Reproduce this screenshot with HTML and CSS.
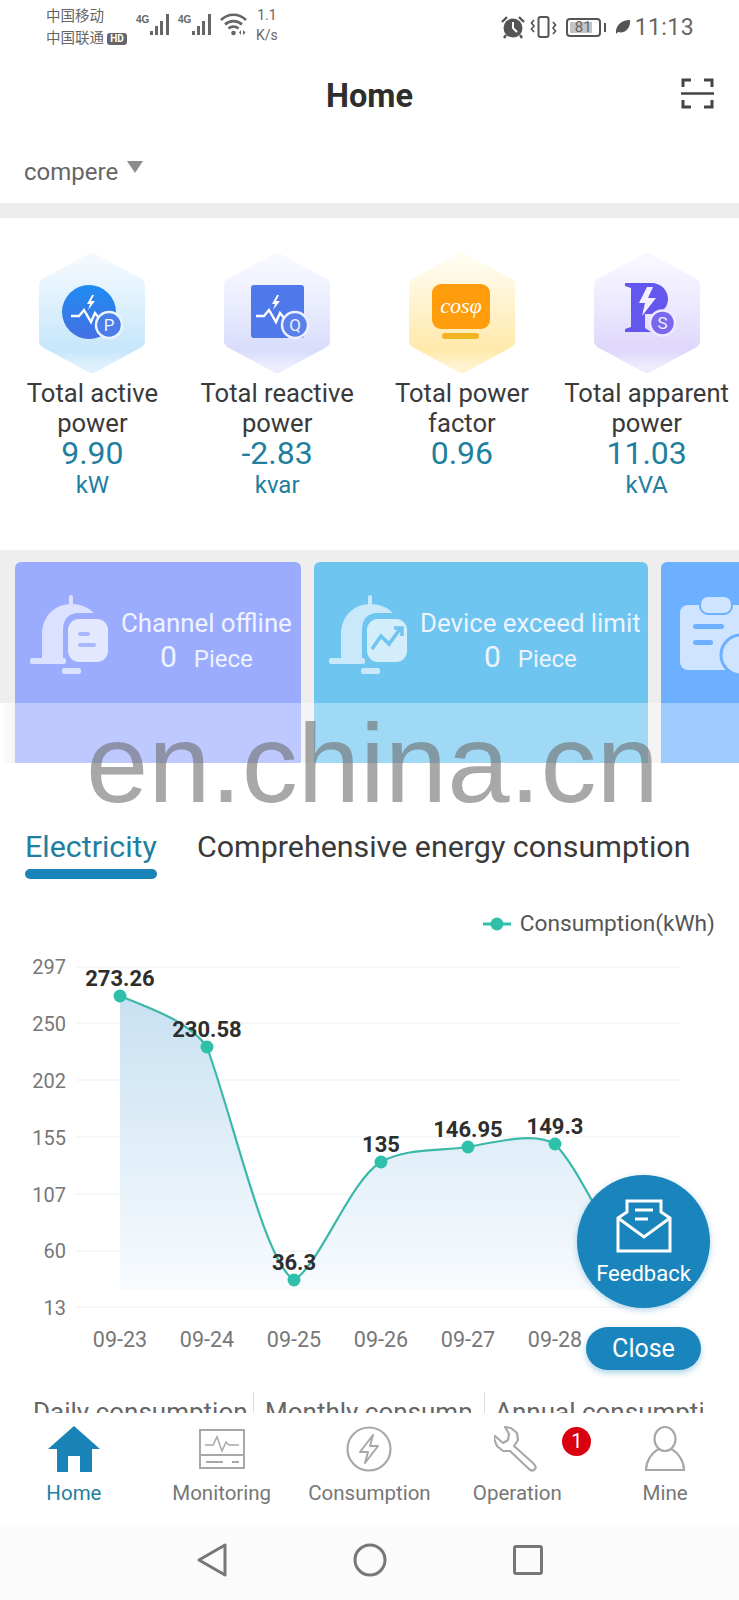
FILE: index.html
```html
<!DOCTYPE html>
<html lang="en">
<head>
  <meta charset="UTF-8">
  <meta name="viewport" content="width=device-width, initial-scale=1.0">
  <title>Home</title>
  <link rel="stylesheet" href="styles.css">
</head>
<body>
  <div class="page">

    <!-- phone status bar -->
    <div class="status">
      <div class="carrier">
        <div>中国移动</div>
        <div>中国联通 <span class="hd">HD</span></div>
      </div>
      <svg class="signal" width="36" height="24" viewBox="0 0 36 24">
        <text x="0" y="10" class="tiny">4G</text>
        <rect x="14" y="18" width="3" height="4"/><rect x="19" y="13" width="3" height="9"/><rect x="24" y="8" width="3" height="14"/><rect x="30" y="1" width="3" height="21"/>
      </svg>
      <svg class="signal" width="36" height="24" viewBox="0 0 36 24">
        <text x="0" y="10" class="tiny">4G</text>
        <rect x="14" y="18" width="3" height="4"/><rect x="19" y="13" width="3" height="9"/><rect x="24" y="8" width="3" height="14"/><rect x="30" y="1" width="3" height="21"/>
      </svg>
      <svg class="wifi" width="27" height="24" viewBox="0 0 27 24">
        <path d="M1 7C8 0 19 0 26 7M5 11.500C10 7 17 7 22 11.500M8.500 15.500C11.500 13 15.500 13 18.500 15.500" fill="none" stroke="#666" stroke-width="2.600"/>
        <circle cx="13.500" cy="20" r="2.300" fill="#666"/>
        <path d="M21 17v5l-2-2.500zM23 17v5l2.500-2.500z" fill="#666"/>
      </svg>
      <div class="speed"><div>1.1</div><div>K/s</div></div>

      <div class="status-right">
        <svg width="24" height="24" viewBox="0 0 24 24">
          <path d="M1 7l5-5M23 7l-5-5" stroke="#555" stroke-width="2.400" fill="none"/>
          <circle cx="12" cy="13" r="9.500" fill="#555"/>
          <path d="M5 20l-2 3M19 20l2 3" stroke="#555" stroke-width="2.400"/>
          <path d="M12 7v6l4 4" stroke="#fff" stroke-width="2" fill="none"/>
        </svg>
        <svg width="27" height="24" viewBox="0 0 27 24">
          <rect x="8.500" y="2" width="10" height="20" rx="2" fill="none" stroke="#555" stroke-width="2"/>
          <path d="M4 5L1.500 8 4 11 1.500 14 4 17M23 7l2.500 3-2.500 3 2.500 3-2.500 3" fill="none" stroke="#555" stroke-width="1.700"/>
        </svg>
        <div class="battery"><span class="battery-fill"></span><span class="battery-num">81</span></div>
        <span class="battery-tip"></span>
        <svg width="16" height="18" viewBox="0 0 16 18">
          <path d="M1 16C0 8 6 2 15 2 16 10 10 16 3 14z" fill="#555"/>
        </svg>
        <span class="time">11:13</span>
      </div>
    </div>

    <div class="header">
      <h1>Home</h1>
      <svg class="scan" width="33" height="31" viewBox="0 0 33 31">
        <path d="M2 9V2H10M23 2H31V9M2 22V29H10M23 29H31V22" fill="none" stroke="#444" stroke-width="3"/>
        <path d="M0 15.500H33" stroke="#444" stroke-width="2.500"/>
      </svg>
    </div>

    <div class="site">compere <span class="caret"></span></div>
    <div class="band"></div>

    <!-- four totals -->
    <div class="metrics">
      <div class="metric">
        <svg class="hex" width="108" height="120" viewBox="0 0 108 120">
          <defs>
            <linearGradient id="hexP" x1="0" y1="0" x2="0" y2="1"><stop offset="0" stop-color="#f3f9fe"/><stop offset=".45" stop-color="#dcf0fd"/><stop offset=".85" stop-color="#c6e6fb"/><stop offset="1" stop-color="#e0f1fd"/></linearGradient>
            <linearGradient id="hexQ" x1="0" y1="0" x2="0" y2="1"><stop offset="0" stop-color="#f8f9ff"/><stop offset=".45" stop-color="#e9ecfe"/><stop offset=".85" stop-color="#d8dcfb"/><stop offset="1" stop-color="#eceefe"/></linearGradient>
            <linearGradient id="hexC" x1="0" y1="0" x2="0" y2="1"><stop offset="0" stop-color="#fffcf0"/><stop offset=".45" stop-color="#fff2cc"/><stop offset=".85" stop-color="#ffe9ab"/><stop offset="1" stop-color="#fff3d0"/></linearGradient>
            <linearGradient id="hexS" x1="0" y1="0" x2="0" y2="1"><stop offset="0" stop-color="#f9f7ff"/><stop offset=".45" stop-color="#ece8fe"/><stop offset=".85" stop-color="#ded6fb"/><stop offset="1" stop-color="#efebfe"/></linearGradient>
            <linearGradient id="blueP" x1="0" y1="0" x2="0" y2="1"><stop offset="0" stop-color="#1f8bf2"/><stop offset="1" stop-color="#4370e2"/></linearGradient>
          </defs>
          <path class="hex-shape" d="M54 7L100 32V88L54 113L8 88V32Z" fill="url(#hexP)" stroke="url(#hexP)"/>
          <circle cx="51" cy="59" r="27" fill="url(#blueP)"/>
          <path d="M33 63H41L46 57L53 69L57 60L61 65" fill="none" stroke="#fff" stroke-width="2.400"/>
          <path d="M54 42L49 51H52L50 57L57 48H53L56 42Z" fill="#fff"/>
          <circle cx="71" cy="72" r="13" fill="#4a7de8" stroke="#eaf4ff" stroke-width="2.500"/>
          <text x="71" y="78" class="hex-letter">P</text>
        </svg>
        <div class="metric-name">Total active power</div>
        <div class="metric-val">9.90</div>
        <div class="metric-unit">kW</div>
      </div>
      <div class="metric">
        <svg class="hex" width="108" height="120" viewBox="0 0 108 120">
          <path class="hex-shape" d="M54 7L100 32V88L54 113L8 88V32Z" fill="url(#hexQ)" stroke="url(#hexQ)"/>
          <rect x="28" y="32" width="53" height="53" rx="3" fill="#4f78ea"/>
          <path d="M33 63H41L46 57L53 69L57 60L61 65" fill="none" stroke="#fff" stroke-width="2.400"/>
          <path d="M54 42L49 51H52L50 57L57 48H53L56 42Z" fill="#fff"/>
          <circle cx="72" cy="72" r="13" fill="#5b80ea" stroke="#eef0ff" stroke-width="2.500"/>
          <text x="72" y="78" class="hex-letter">Q</text>
        </svg>
        <div class="metric-name">Total reactive power</div>
        <div class="metric-val">-2.83</div>
        <div class="metric-unit">kvar</div>
      </div>
      <div class="metric">
        <svg class="hex" width="108" height="120" viewBox="0 0 108 120">
          <path class="hex-shape" d="M54 7L100 32V88L54 113L8 88V32Z" fill="url(#hexC)" stroke="url(#hexC)"/>
          <rect x="24" y="31" width="58" height="45" rx="9" fill="#ff9d0d"/>
          <text x="53" y="60" class="cos">cos&#966;</text>
          <rect x="34" y="80" width="37" height="6" rx="3" fill="#f4b422"/>
        </svg>
        <div class="metric-name">Total power factor</div>
        <div class="metric-val">0.96</div>
      </div>
      <div class="metric">
        <svg class="hex" width="108" height="120" viewBox="0 0 108 120">
          <path class="hex-shape" d="M54 7L100 32V88L54 113L8 88V32Z" fill="url(#hexS)" stroke="url(#hexS)"/>
          <path d="M32 30H58C69 30 75 38 75 46C75 55 68 61 58 61H52V75L58 79H32V76L38 74V35L32 33Z" fill="#6457ee"/>
          <path d="M54 34L46 50H52L49 63L63 45H55L60 34Z" fill="#f3efff"/>
          <circle cx="69.500" cy="70" r="12.500" fill="#7b68ee" stroke="#efeaff" stroke-width="2.500"/>
          <text x="69.500" y="76" class="hex-letter">S</text>
        </svg>
        <div class="metric-name">Total apparent power</div>
        <div class="metric-val">11.03</div>
        <div class="metric-unit">kVA</div>
      </div>
    </div>

    <!-- alert cards, third one runs off the screen -->
    <div class="alerts">
      <div class="alert alert-a">
        <svg class="alert-icon" width="80" height="80" viewBox="0 0 80 80">
          <rect x="39" y="0" width="4" height="11" rx="2" fill="#dbe2ff"/>
          <path d="M12 63V40C12 20 26 9 41 9C50 9 58 12 64 18H46C36 20 33 26 33 36V63Z" fill="#dbe2ff"/>
          <rect x="0" y="63" width="36" height="6" rx="2" fill="#dbe2ff"/>
          <rect x="38" y="24" width="40" height="43" rx="11" fill="#e3e8ff"/>
          <rect x="48" y="37" width="12" height="4" rx="2" fill="#a8b8ff"/><rect x="48" y="48" width="18" height="4" rx="2" fill="#a8b8ff"/>
          <rect x="32" y="73" width="19" height="6" rx="2" fill="#dbe2ff"/>
        </svg>
        <div class="alert-text">
          <div class="alert-name">Channel offline</div>
          <div class="alert-count"><span class="num">0</span><span>Piece</span></div>
        </div>
      </div>
      <div class="alert alert-b">
        <svg class="alert-icon" width="80" height="80" viewBox="0 0 80 80">
          <rect x="39" y="0" width="4" height="11" rx="2" fill="#c9e9fa"/>
          <path d="M12 63V40C12 20 26 9 41 9C50 9 58 12 64 18H46C36 20 33 26 33 36V63Z" fill="#c9e9fa"/>
          <rect x="0" y="63" width="36" height="6" rx="2" fill="#c9e9fa"/>
          <rect x="38" y="24" width="40" height="43" rx="11" fill="#d3edfb"/>
          <path d="M43 54L52 41L60 49L71 34M65 33H73V41" fill="none" stroke="#6dc5f0" stroke-width="3.500"/>
          <rect x="32" y="73" width="19" height="6" rx="2" fill="#c9e9fa"/>
        </svg>
        <div class="alert-text">
          <div class="alert-name">Device exceed limit</div>
          <div class="alert-count"><span class="num">0</span><span>Piece</span></div>
        </div>
      </div>
      <div class="alert alert-c">
        <svg class="alert-icon" width="80" height="80" viewBox="0 0 80 80">
          <rect x="1" y="10" width="70" height="65" rx="8" fill="#cfe4ff"/>
          <rect x="21" y="1" width="32" height="18" rx="8" fill="#cfe4ff" stroke="#6cb0ff" stroke-width="2"/>
          <rect x="14" y="29" width="31" height="5" rx="2.500" fill="#6cb0ff"/><rect x="14" y="45" width="20" height="5" rx="2.500" fill="#6cb0ff"/>
          <circle cx="62" cy="60" r="20" fill="#cfe4ff" stroke="#6cb0ff" stroke-width="3"/>
          <path d="M62 50V62H70" fill="none" stroke="#6cb0ff" stroke-width="3"/>
        </svg>
      </div>
      <div class="alerts-fade"></div>
    </div>

    <div class="tabs">
      <div class="tab tab-on">Electricity</div>
      <div class="tab">Comprehensive energy consumption</div>
    </div>

    <div class="legend">
      <svg width="28" height="14" viewBox="0 0 28 14"><path d="M0 7H28" stroke="#2fc0ab" stroke-width="3"/><circle cx="14" cy="7" r="6.500" fill="#2fc0ab"/></svg>
      <span>Consumption(kWh)</span>
    </div>

    <svg class="chart" width="739" height="442" viewBox="0 950 739 442">
      <defs>
        <linearGradient id="area" x1="0" y1="0" x2="0" y2="1"><stop offset="0" stop-color="#c8e1f2"/><stop offset="1" stop-color="#f8fbfe"/></linearGradient>
      </defs>
      <g class="grid">
        <path d="M76 967H680M76 1023H680M76 1080H680M76 1137H680M76 1194H680M76 1251H680M76 1307H680"/>
      </g>
      <g class="y-axis">
        <text x="66" y="974">297</text>
        <text x="66" y="1031">250</text>
        <text x="66" y="1088">202</text>
        <text x="66" y="1145">155</text>
        <text x="66" y="1202">107</text>
        <text x="66" y="1258">60</text>
        <text x="66" y="1315">13</text>
      </g>
      <path d="M120 996C150 1008 190 1022 207 1047C235 1125 265 1262 294 1280C320 1265 350 1180 381 1162C405 1148 440 1151 468 1147C500 1141 535 1132 555 1144C575 1165 590 1200 615 1240L615 1290H120Z" fill="url(#area)"/>
      <path d="M120 996C150 1008 190 1022 207 1047C235 1125 265 1262 294 1280C320 1265 350 1180 381 1162C405 1148 440 1151 468 1147C500 1141 535 1132 555 1144C575 1165 590 1200 615 1240" fill="none" stroke="#3bb8a8" stroke-width="2.200"/>
      <g fill="#2fc0ab">
        <circle cx="120" cy="996" r="6.500"/>
        <circle cx="207" cy="1047" r="6.500"/>
        <circle cx="294" cy="1280" r="6.500"/>
        <circle cx="381" cy="1162" r="6.500"/>
        <circle cx="468" cy="1147" r="6.500"/>
        <circle cx="555" cy="1144" r="6.500"/>
      </g>
      <g class="point-label">
        <text x="120" y="986">273.26</text>
        <text x="207" y="1037">230.58</text>
        <text x="294" y="1270">36.3</text>
        <text x="381" y="1152">135</text>
        <text x="468" y="1137">146.95</text>
        <text x="555" y="1134">149.3</text>
      </g>
      <g class="x-axis">
        <text x="120" y="1347">09-23</text>
        <text x="207" y="1347">09-24</text>
        <text x="294" y="1347">09-25</text>
        <text x="381" y="1347">09-26</text>
        <text x="468" y="1347">09-27</text>
        <text x="555" y="1347">09-28</text>
      </g>
    </svg>

    <div class="periods">
      <div class="period period-a"><span>Daily consumption</span></div>
      <div class="period period-b"><span>Monthly consumption</span></div>
      <div class="period period-c"><span>Annual consumption</span></div>
    </div>

    <div class="tabbar">
      <div class="tabitem tabitem-on">
        <svg width="52" height="46" viewBox="0 0 52 46"><path d="M26 0L52 23H44V46H32V30H20V46H9V23H0Z" fill="#1a84b8"/></svg>
        <span>Home</span>
      </div>
      <div class="tabitem">
        <svg width="46" height="46" viewBox="0 0 46 46" fill="none" stroke="#a8a8a8" stroke-width="2">
          <rect x="1" y="4" width="44" height="38"/>
          <path d="M1 29H45" />
          <path d="M6 19H14L18 11L23 25L27 16L30 19H40" stroke-width="1.500"/>
          <path d="M7 36H24M33 36H40" stroke-width="2"/>
        </svg>
        <span>Monitoring</span>
      </div>
      <div class="tabitem">
        <svg width="46" height="46" viewBox="0 0 46 46" fill="none" stroke="#a8a8a8" stroke-width="2.200">
          <circle cx="23" cy="23" r="21.500"/>
          <path d="M27 9L14 26H22L19 37L32 20H24Z" stroke-linejoin="round" stroke-width="2"/>
        </svg>
        <span>Consumption</span>
      </div>
      <div class="tabitem">
        <svg width="46" height="46" viewBox="0 0 46 46" fill="none" stroke="#a8a8a8" stroke-width="2.200" stroke-linejoin="round">
          <path d="M11 1L17 2L23 7L24 14L20 20L39 37C42 40 42 42 41 43C39 45 37 45 35 43L16 25L9 25L3 20L0 13L1 10L9 17L14 14L15 8Z"/>
        </svg>
        <span>Operation</span>
        <b class="badge">1</b>
      </div>
      <div class="tabitem">
        <svg width="46" height="46" viewBox="0 0 46 46" fill="none" stroke="#a8a8a8" stroke-width="2.200">
          <ellipse cx="23" cy="13" rx="10.500" ry="12"/>
          <path d="M17 23C9 27 4 36 4 44H42C42 36 37 27 29 23"/>
        </svg>
        <span>Mine</span>
      </div>
    </div>

    <div class="navbar">
      <svg width="30" height="34" viewBox="0 0 30 34"><path d="M28 2V32L2 17Z" fill="none" stroke="#777" stroke-width="3" stroke-linejoin="round"/></svg>
      <svg width="34" height="34" viewBox="0 0 34 34"><circle cx="17" cy="17" r="15" fill="none" stroke="#777" stroke-width="3"/></svg>
      <svg width="30" height="30" viewBox="0 0 30 30"><rect x="1.500" y="1.500" width="27" height="27" rx="1.500" fill="none" stroke="#777" stroke-width="3"/></svg>
    </div>

    <!-- things floating over the page -->
    <div class="watermark">en.china.cn</div>
    <div class="fab">
      <svg width="56" height="54" viewBox="0 0 56 54" fill="none" stroke="#fff" stroke-width="3">
        <path d="M2 19V52H54V19L45 13V2H11V13Z"/>
        <path d="M2 19L28 38L54 19"/>
        <path d="M19 11H37M19 20H32" stroke-width="3"/>
      </svg>
      <span>Feedback</span>
    </div>
    <div class="close-btn">Close</div>
  </div>
</body>
</html>
```

FILE: styles.css
```css
html, body {
  margin: 0;
  padding: 0;
  background: #fff;
}
body {
  font-family: Roboto, "Noto Sans CJK SC", sans-serif;
  color: #333;
}
.page {
  position: relative;
  width: 739px;
  height: 1600px;
  overflow: hidden;
}

/* status bar */
.status {
  height: 56px;
  display: flex;
  align-items: flex-start;
  padding: 4px 45px 0 46px;
  box-sizing: border-box;
  color: #666;
}
.carrier {
  width: 90px;
  font-family: "Noto Sans CJK SC", sans-serif;
  font-size: 14.500px;
  line-height: 22px;
  white-space: nowrap;
}
.hd {
  display: inline-block;
  background: #666;
  color: #fff;
  font: bold 10px/12px Roboto, sans-serif;
  padding: 0 3px;
  border-radius: 3px;
  vertical-align: 1px;
}
.signal {
  margin: 9px 6px 0 0;
  fill: #666;
}
.tiny {
  font: bold 10px "Liberation Sans", sans-serif;
}
.wifi {
  margin: 9px 9px 0 0;
}
.speed {
  font-size: 14px;
  line-height: 20px;
  text-align: center;
  margin-top: 1px;
}
.status-right {
  margin-left: auto;
  display: flex;
  align-items: center;
  height: 46px;
  gap: 5px;
}
.battery {
  position: relative;
  width: 35px;
  height: 19px;
  border: 2px solid #555;
  border-radius: 4px;
  box-sizing: border-box;
  margin-left: 4px;
  text-align: center;
  font-size: 15px;
  line-height: 15px;
}
.battery-fill {
  position: absolute;
  left: 2px;
  top: 2px;
  bottom: 2px;
  width: 22px;
  background: #c4c4c4;
}
.battery-num {
  position: relative;
}
.battery-tip {
  width: 2px;
  height: 9px;
  background: #555;
  margin: 0 4px 0 -2px;
}
.time {
  font-size: 23px;
  margin-left: -1px;
  letter-spacing: .4px;
}

/* title */
.header {
  height: 78px;
  position: relative;
  display: flex;
  align-items: center;
  justify-content: center;
}
.header h1 {
  margin: 2px 0 0;
  font-size: 32.500px;
  font-weight: 700;
  color: #2e2e2e;
}
.scan {
  position: absolute;
  right: 25px;
  top: 22px;
}
.site {
  height: 69px;
  padding: 20px 0 0 24px;
  box-sizing: border-box;
  font-size: 24px;
  line-height: 36px;
  color: #666;
}
.caret {
  display: inline-block;
  border-left: 8px solid transparent;
  border-right: 8px solid transparent;
  border-top: 12px solid #8c8c8c;
  margin-left: 3px;
  vertical-align: 7px;
}
.band {
  height: 15px;
  background: #ececec;
}

/* totals */
.metrics {
  height: 332px;
  display: grid;
  grid-template-columns: repeat(4, 1fr);
  padding-top: 35px;
  box-sizing: border-box;
}
.metric {
  display: flex;
  flex-direction: column;
  align-items: center;
  text-align: center;
}
.hex-shape {
  stroke-width: 14px;
  stroke-linejoin: round;
}
.hex-letter {
  font: 17px Roboto, sans-serif;
  fill: #eef2ff;
  text-anchor: middle;
}
.cos {
  font: italic 22px "Liberation Serif", serif;
  fill: #fff;
  text-anchor: middle;
}
.metric-name {
  font-size: 25.600px;
  line-height: 30px;
  margin-top: 5px;
  color: #3a3a3a;
}
.metric-val {
  font-size: 32px;
  line-height: 30px;
  color: #1f7f9e;
}
.metric-unit {
  font-size: 24px;
  line-height: 34px;
  color: #1f7f9e;
}

/* alert cards */
.alerts {
  position: relative;
  height: 213px;
  background: #eeeeee;
  display: flex;
  gap: 13px;
  padding: 12px 0 0 15px;
  box-sizing: border-box;
  overflow: hidden;
}
.alert {
  flex: none;
  display: flex;
  border-radius: 6px 6px 0 0;
  color: #eef3ff;
}
.alert-a {
  width: 286px;
  background: #9bacff;
  padding: 33px 0 0 15px;
  box-sizing: border-box;
}
.alert-b {
  width: 334px;
  background: #6dc5f0;
  padding: 33px 0 0 15px;
  box-sizing: border-box;
}
.alert-c {
  width: 120px;
  background: #6cb0ff;
  padding: 33px 0 0 18px;
  box-sizing: border-box;
}
.alert-icon {
  flex: none;
}
.alert-text {
  margin-left: 11px;
  padding-top: 10px;
  text-align: center;
}
.alert-name {
  font-size: 25.800px;
  line-height: 34px;
  margin-top: 1px;
  white-space: nowrap;
}
.alert-count {
  display: flex;
  justify-content: center;
  align-items: baseline;
  gap: 17px;
  font-size: 24px;
  line-height: 34px;
}
.num {
  font-size: 30px;
}
.alerts-fade {
  position: absolute;
  left: 0;
  right: 0;
  bottom: 0;
  height: 60px;
  background: linear-gradient(to right, #fff, rgba(255,255,255,.35) 15px);
}

/* tabs */
.tabs {
  height: 122px;
  display: flex;
  align-items: flex-start;
  gap: 40px;
  padding: 66px 0 0 25px;
  box-sizing: border-box;
}
.tab {
  font-size: 30.400px;
  line-height: 36px;
  color: #3a3a3a;
  white-space: nowrap;
}
.tab-on {
  color: #1f7f9e;
}
.tab-on::after {
  content: "";
  display: block;
  height: 10px;
  margin-top: 4px;
  background: #1a84b8;
  border-radius: 5px;
}

.legend {
  height: 65px;
  display: flex;
  align-items: center;
  justify-content: flex-end;
  gap: 9px;
  padding: 21px 24px 9px 0;
  box-sizing: border-box;
  font-size: 22.700px;
  color: #555;
}

/* chart */
.chart {
  display: block;
}
.grid path {
  stroke: #efefef;
  stroke-width: 1.200;
  fill: none;
}
.y-axis text {
  font-size: 20px;
  fill: #777;
  text-anchor: end;
}
.x-axis text {
  font-size: 21.500px;
  fill: #777;
  text-anchor: middle;
}
.point-label text {
  font-size: 22px;
  font-weight: 700;
  fill: #2e2e2e;
  text-anchor: middle;
}

/* period row, cut by tab bar */
.periods {
  height: 21px;
  display: flex;
  padding-left: 33px;
  overflow: hidden;
}
.period {
  flex: none;
  height: 21px;
  box-sizing: border-box;
  padding-top: 2px;
  overflow: hidden;
  white-space: nowrap;
  font-size: 26px;
  line-height: 36px;
  color: #666;
}
.period span {
  display: block;
  overflow: hidden;
}
.period-a {
  width: 220px;
}
.period-b {
  width: 231px;
  padding: 2px 13px 0 11px;
  border-left: 1px solid #ddd;
}
.period-c {
  width: 219px;
  padding: 2px 0 0 10px;
  border-left: 1px solid #ddd;
}

/* bottom bar */
.tabbar {
  height: 112px;
  display: grid;
  grid-template-columns: repeat(5, 1fr);
  background: #fff;
}
.tabitem {
  position: relative;
  display: flex;
  flex-direction: column;
  align-items: center;
  padding-top: 13px;
  font-size: 20.500px;
  line-height: 30px;
  color: #777;
  gap: 6px;
}
.tabitem-on {
  color: #1f7f9e;
}
.badge {
  position: absolute;
  left: 119px;
  top: 14px;
  width: 29px;
  height: 29px;
  border-radius: 50%;
  background: #d9000f;
  color: #fff;
  font-size: 20px;
  font-weight: 400;
  line-height: 29px;
  text-align: center;
}
.navbar {
  height: 75px;
  background: #fbfbfb;
  display: flex;
  justify-content: center;
  align-items: center;
  gap: 126px;
  padding-bottom: 5px;
  box-sizing: border-box;
}

/* floating */
.watermark {
  position: absolute;
  left: 86px;
  top: 701px;
  font: 112px/126px "Liberation Sans", sans-serif;
  color: rgba(110,110,110,.6);
  white-space: nowrap;
}
.fab {
  position: absolute;
  left: 577px;
  top: 1175px;
  width: 133px;
  height: 133px;
  border-radius: 50%;
  background: #1a84bc;
  box-shadow: 0 2px 6px rgba(26,132,188,.35);
  color: #fff;
  font-size: 22px;
  display: flex;
  flex-direction: column;
  align-items: center;
  padding-top: 24px;
  box-sizing: border-box;
  gap: 8px;
}
.close-btn {
  position: absolute;
  left: 586px;
  top: 1327px;
  width: 115px;
  height: 43px;
  border-radius: 22px;
  background: #1a84bc;
  box-shadow: 0 3px 6px rgba(26,132,188,.35);
  color: #fff;
  font-size: 25px;
  line-height: 43px;
  text-align: center;
}
```
